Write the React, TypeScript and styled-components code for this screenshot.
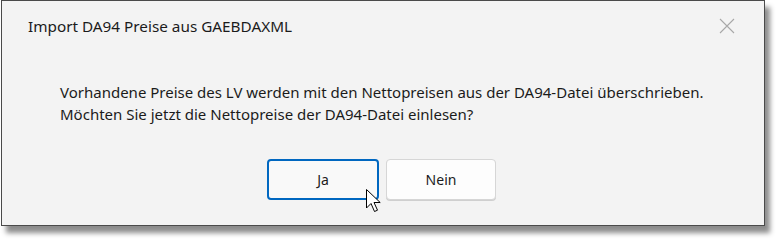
import React from 'react';
import styled, { createGlobalStyle } from 'styled-components';

const GlobalStyle = createGlobalStyle`
  html, body {
    margin: 0;
    padding: 0;
    background: #ffffff;
  }
  body {
    font-family: 'Segoe UI', 'Noto Sans', 'Open Sans', sans-serif;
  }
`;

const Page = styled.div`
  width: 780px;
  height: 242px;
  padding: 0 0 0 1px;
  box-sizing: border-box;
`;

const Dialog = styled.div`
  position: relative;
  width: 764px;
  height: 226px;
  box-sizing: border-box;
  background: #f3f3f3;
  border: 1px solid #4a4a4a;
  box-shadow: 5px 7px 5px rgba(0, 0, 0, 0.45);
  display: flex;
  flex-direction: column;
`;

const Header = styled.div`
  display: flex;
  align-items: center;
  justify-content: space-between;
  height: 50px;
  padding: 0 28px 0 26px;
`;

const Title = styled.span`
  font-size: 15.3px;
  color: #1b1b1b;
`;

const CloseButton = styled.button`
  border: none;
  background: transparent;
  padding: 0;
  width: 18px;
  height: 18px;
  display: flex;
  align-items: center;
  justify-content: center;
`;

const Message = styled.div`
  padding: 30px 0 0 58px;
  font-size: 15px;
  line-height: 22px;
  color: #1b1b1b;
`;

const Buttons = styled.div`
  display: flex;
  justify-content: center;
  gap: 7px;
  margin-top: 34px;
  padding-right: 3px;
`;

const Button = styled.button<{ $primary?: boolean }>`
  position: relative;
  width: ${(p) => (p.$primary ? '112px' : '110px')};
  height: 41px;
  box-sizing: border-box;
  border-radius: 4px;
  font-family: inherit;
  font-size: 14px;
  color: #1b1b1b;
  background: ${(p) => (p.$primary ? '#f9f9f9' : '#fdfdfd')};
  border: ${(p) => (p.$primary ? '2px solid #0067c0' : '1px solid #d6d6d6')};
  box-shadow: ${(p) => (p.$primary ? 'none' : '0 1px 0 #cfcfcf')};
`;

const Cursor = styled.svg`
  position: absolute;
  left: 97px;
  top: 28px;
  overflow: visible;
`;

export default function App() {
  return (
    <Page>
      <GlobalStyle />
      <Dialog>
        <Header>
          <Title>Import DA94 Preise aus GAEBDAXML</Title>
          <CloseButton aria-label="Schließen">
            <svg width="16" height="16" viewBox="0 0 16 16">
              <path d="M1 1 L15 15 M15 1 L1 15" stroke="#a8a8a8" strokeWidth="1.1" />
            </svg>
          </CloseButton>
        </Header>
        <Message>
          Vorhandene Preise des LV werden mit den Nettopreisen aus der DA94-Datei überschrieben.
          <br />
          Möchten Sie jetzt die Nettopreise der DA94-Datei einlesen?
        </Message>
        <Buttons>
          <Button $primary>
            Ja
            <Cursor width="20" height="27" viewBox="0 0 20 27">
              <path
                d="M0.5 0.5 L0.5 19 L5 14.5 L8.5 22.5 L11.5 21.2 L8 13.5 L14.2 13.5 Z"
                fill="#ffffff"
                stroke="#000000"
                strokeWidth="1"
                strokeLinejoin="miter"
              />
            </Cursor>
          </Button>
          <Button>Nein</Button>
        </Buttons>
      </Dialog>
    </Page>
  );
}
